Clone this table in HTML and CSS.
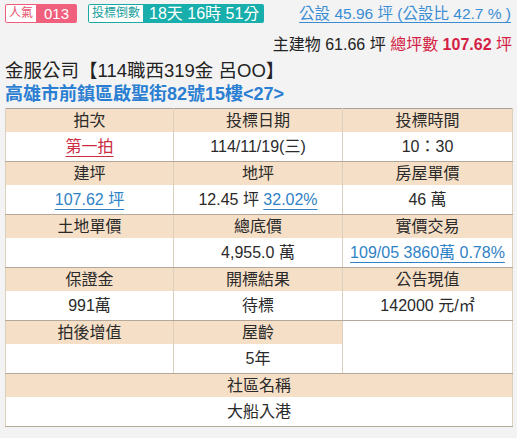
FILE: index.html
```html
<!DOCTYPE html>
<html lang="zh-Hant">
<head>
<meta charset="utf-8">
<link rel="stylesheet" href="styles.css">
</head>
<body>
<div class="page">
  <div class="top">
    <div class="badges">
      <span class="badge pink"><span class="lbl">人氣</span><span class="val">013</span></span>
      <span class="badge teal"><span class="lbl">投標倒數</span><span class="val">18天 16時 51分</span></span>
    </div>
    <a class="public">公設 45.96 坪 (公設比 42.7 % )</a>
  </div>
  <div class="area">主建物 61.66 坪 <span class="total">總坪數 <b>107.62</b> 坪</span></div>
  <div class="title">金服公司【114職西319金 呂OO】</div>
  <div class="addr">高雄市前鎮區啟聖街82號15樓&lt;27&gt;</div>
  <table class="info">
    <colgroup><col class="c1"><col class="c2"><col class="c3"></colgroup>
    <tr class="h"><td>拍次</td><td>投標日期</td><td>投標時間</td></tr>
    <tr class="v"><td><a class="red">第一拍</a></td><td>114/11/19(三)</td><td>10：30</td></tr>
    <tr class="h"><td>建坪</td><td>地坪</td><td>房屋單價</td></tr>
    <tr class="v"><td><a class="blue">107.62 坪</a></td><td>12.45 坪 <a class="blue">32.02%</a></td><td>46 萬</td></tr>
    <tr class="h"><td>土地單價</td><td>總底價</td><td>實價交易</td></tr>
    <tr class="v"><td></td><td>4,955.0 萬</td><td><a class="blue">109/05 3860萬 0.78%</a></td></tr>
    <tr class="h"><td>保證金</td><td>開標結果</td><td>公告現值</td></tr>
    <tr class="v"><td>991萬</td><td>待標</td><td>142000 元/㎡</td></tr>
    <tr class="h"><td>拍後增值</td><td>屋齡</td><td class="blank" rowspan="2"></td></tr>
    <tr class="v"><td></td><td>5年</td></tr>
    <tr class="h"><td colspan="3">社區名稱</td></tr>
    <tr class="v"><td colspan="3">大船入港</td></tr>
  </table>
</div>
</body>
</html>
```
FILE: styles.css
```css
html, body { margin: 0; padding: 0; background: #f3f3f3; }
body { font-family: "Liberation Sans", "Noto Sans CJK TC", sans-serif; color: #222; }
.page { padding: 4px 5px 0 5px; width: 507px; }
.top { display: flex; justify-content: space-between; align-items: flex-start; height: 20px; }
.badges { display: flex; gap: 11px; }
.badge { display: inline-flex; height: 19px; border-radius: 2px; overflow: hidden; font-size: 12px; line-height: 17px; }
.badge .lbl { background: #fff; padding: 0 3px 0 3px; border: 1px solid; border-right: none; border-radius: 2px 0 0 2px; }
.badge .val { color: #fff; display: flex; align-items: center; }
.badge.pink .lbl { border-color: #ee5d79; color: #e8506c; }
.badge.pink .val { background: #f0607c; font-size: 15px; padding: 0 8px 0 8px; }
.badge.teal .lbl { border-color: #19a9a3; color: #1a9f9a; }
.badge.teal .val { background: #17aeac; font-size: 16px; padding: 0 5px 0 6px; }
.public { color: #3b8dd3; text-decoration: underline; text-underline-offset: 3px; font-size: 15.5px; line-height: 19px; margin-right: 1px; }
.area { text-align: right; font-size: 16px; margin-top: 11px; line-height: 19px; }
.total { color: #d41f46; }
.total b { font-weight: bold; }
.title { font-size: 18.5px; line-height: 22px; margin-top: 6px; color: #222; }
.addr { font-size: 18px; line-height: 21px; font-weight: bold; color: #2b7fd2; margin-top: 2px; }
.info { border-collapse: collapse; width: 507px; margin-top: 3px; border: 1px solid #a5a29d; table-layout: fixed; font-size: 16px; color: #2a2a2a; }
.info col.c1 { width: 168px; }
.info col.c2 { width: 169px; }
.info col.c3 { width: 170px; }
.info td { text-align: center; padding: 0; border-left: 1px solid #dccfbe; border-right: 1px solid #dccfbe; }
.info tr.h td { background: #f5dfc7; height: 23px; line-height: 20px; }
.info tr.v td { background: #fff; height: 29px; border-bottom: 1px solid #b3a89a; line-height: 20px; }
.info tr.h td.blank { background: #fff; border-bottom: 1px solid #b3a89a; }
a.red { color: #cc2a3f; text-decoration: underline; text-underline-offset: 4px; }
a.blue { color: #2f82c6; text-decoration: underline; text-underline-offset: 4px; }
```
